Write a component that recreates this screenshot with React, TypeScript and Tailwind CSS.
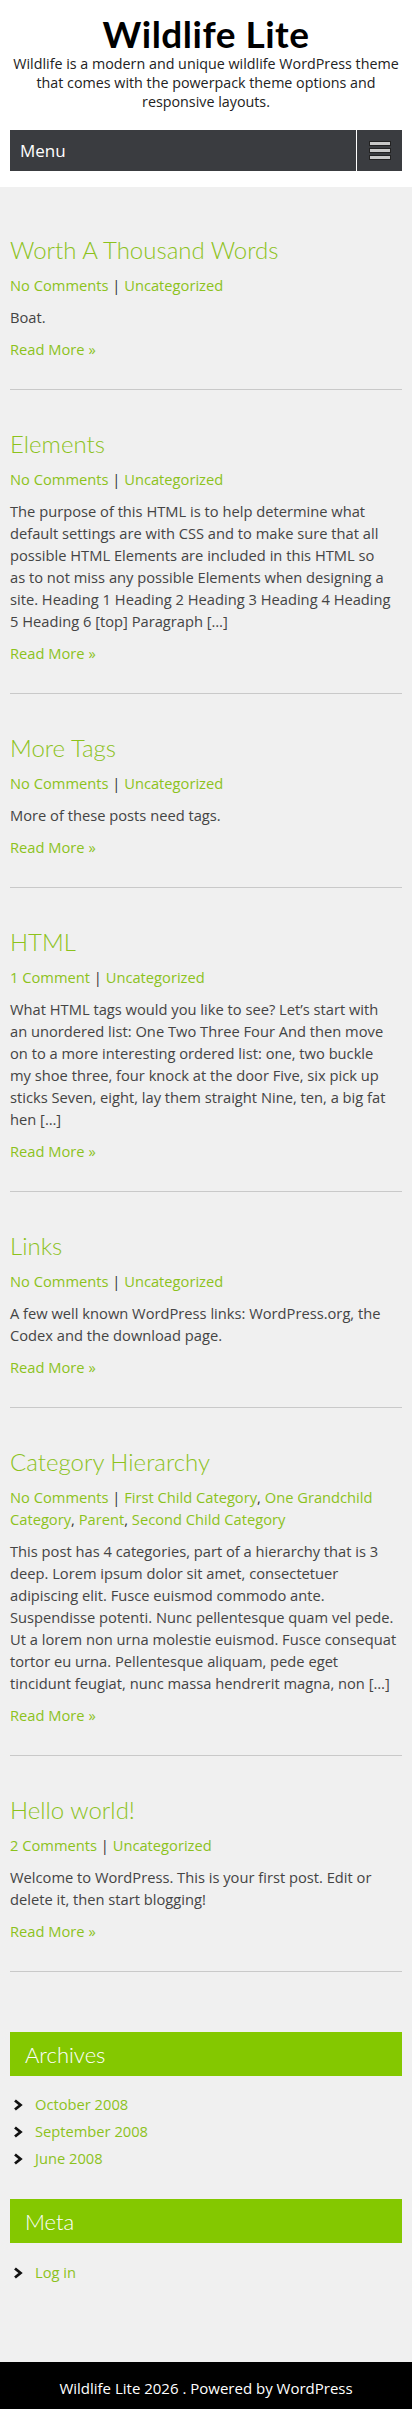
import { ReactNode } from "react";

type Post = {
  title: string;
  comments: string;
  categories: string[];
  excerpt: string;
};

const posts: Post[] = [
  {
    title: "Worth A Thousand Words",
    comments: "No Comments",
    categories: ["Uncategorized"],
    excerpt: "Boat.",
  },
  {
    title: "Elements",
    comments: "No Comments",
    categories: ["Uncategorized"],
    excerpt:
      "The purpose of this HTML is to help determine what\ndefault settings are with CSS and to make sure that all\npossible HTML Elements are included in this HTML so\nas to not miss any possible Elements when designing a\nsite. Heading 1 Heading 2 Heading 3 Heading 4 Heading\n5 Heading 6 [top] Paragraph […]",
  },
  {
    title: "More Tags",
    comments: "No Comments",
    categories: ["Uncategorized"],
    excerpt: "More of these posts need tags.",
  },
  {
    title: "HTML",
    comments: "1 Comment",
    categories: ["Uncategorized"],
    excerpt:
      "What HTML tags would you like to see? Let’s start with\nan unordered list: One Two Three Four And then move\non to a more interesting ordered list: one, two buckle\nmy shoe three, four knock at the door Five, six pick up\nsticks Seven, eight, lay them straight Nine, ten, a big fat\nhen […]",
  },
  {
    title: "Links",
    comments: "No Comments",
    categories: ["Uncategorized"],
    excerpt: "A few well known WordPress links: WordPress.org, the\nCodex and the download page.",
  },
  {
    title: "Category Hierarchy",
    comments: "No Comments",
    categories: ["First Child Category", "One Grandchild Category", "Parent", "Second Child Category"],
    excerpt:
      "This post has 4 categories, part of a hierarchy that is 3\ndeep. Lorem ipsum dolor sit amet, consectetuer\nadipiscing elit. Fusce euismod commodo ante.\nSuspendisse potenti. Nunc pellentesque quam vel pede.\nUt a lorem non urna molestie euismod. Fusce consequat\ntortor eu urna. Pellentesque aliquam, pede eget\ntincidunt feugiat, nunc massa hendrerit magna, non […]",
  },
  {
    title: "Hello world!",
    comments: "2 Comments",
    categories: ["Uncategorized"],
    excerpt: "Welcome to WordPress. This is your first post. Edit or\ndelete it, then start blogging!",
  },
];

const Chevron = () => (
  <svg width="10" height="12" viewBox="0 0 10 12" className="shrink-0">
    <path d="M2 1.5 L7.5 6 L2 10.5" fill="none" stroke="#111" strokeWidth="2.8" strokeLinejoin="miter" />
  </svg>
);

function Widget({ title, children }: { title: string; children: ReactNode }) {
  return (
    <section>
      <h3 className="bg-[#84c800] h-[44px] flex items-center pl-[15px] text-white text-[22px] font-light font-['Lato',sans-serif]">
        {title}
      </h3>
      <ul className="text-[14.7px] leading-[27px]">{children}</ul>
    </section>
  );
}

function WidgetItem({ label }: { label: string }) {
  return (
    <li className="flex items-center gap-[12px] pl-[3px] h-[27px]">
      <Chevron />
      <a className="text-[#8cc21c]">{label}</a>
    </li>
  );
}

export default function App() {
  return (
    <div className="font-['Open_Sans',sans-serif] text-[#444]">
      <header className="bg-white px-[10px] pt-[13px] pb-[16px]">
        <h1 className="text-center text-[37px] leading-[41px] font-bold text-black font-['Lato',sans-serif] tracking-[0.5px]">
          Wildlife Lite
        </h1>
        <p className="text-center text-[14.3px] leading-[19px] text-[#222]">
          Wildlife is a modern and unique wildlife WordPress theme that comes with the powerpack theme options and
          responsive layouts.
        </p>
        <nav className="mt-[19px] h-[41px] bg-[#3a3c40] flex items-stretch">
          <div className="flex-1 flex items-center pl-[10px] text-white text-[17px]">Menu</div>
          <div className="w-[1px] bg-white"></div>
          <button className="w-[45px] flex flex-col items-center justify-center gap-[4px]" aria-label="Menu">
            <span className="block w-[20px] h-[3px] bg-[#c8c8c8] outline outline-1 outline-[#222]"></span>
            <span className="block w-[20px] h-[3px] bg-[#c8c8c8] outline outline-1 outline-[#222]"></span>
            <span className="block w-[20px] h-[3px] bg-[#c8c8c8] outline outline-1 outline-[#222]"></span>
          </button>
        </nav>
      </header>

      <main className="bg-[#f0f0f0] px-[10px] pt-[9px] pb-[76px]">
        {posts.map((post) => (
          <article key={post.title} className="pt-[38px] pb-[29px] border-b border-[#c9c9c9]">
            <h2 className="text-[24px] leading-[32px] font-light text-[#8cc21c] font-['Lato',sans-serif]">
              {post.title}
            </h2>
            <div className="mt-[8px] text-[14.7px] leading-[22px] text-[#8cc21c]">
              <a>{post.comments}</a>
              <span className="text-[#333]"> | </span>
              {post.categories.map((c, i) => (
                <span key={c}>
                  <a>{c}</a>
                  {i < post.categories.length - 1 && <span className="text-[#333]">, </span>}
                </span>
              ))}
            </div>
            <p className="mt-[10px] text-[14.7px] leading-[22px] text-[#444] whitespace-pre-line">{post.excerpt}</p>
            <a className="block mt-[10px] text-[14.7px] leading-[22px] text-[#8cc21c]">Read More »</a>
          </article>
        ))}

        <aside className="mt-[60px]">
          <Widget title="Archives">
            <div className="pt-[15px]">
              <WidgetItem label="October 2008" />
              <WidgetItem label="September 2008" />
              <WidgetItem label="June 2008" />
            </div>
          </Widget>
          <div className="mt-[27px]">
            <Widget title="Meta">
              <div className="pt-[16px]">
                <WidgetItem label="Log in" />
              </div>
            </Widget>
          </div>
        </aside>
      </main>

      <footer className="bg-black h-[52px] flex items-center justify-center text-white text-[15px]">
        Wildlife Lite 2026 . Powered by WordPress
      </footer>
    </div>
  );
}
